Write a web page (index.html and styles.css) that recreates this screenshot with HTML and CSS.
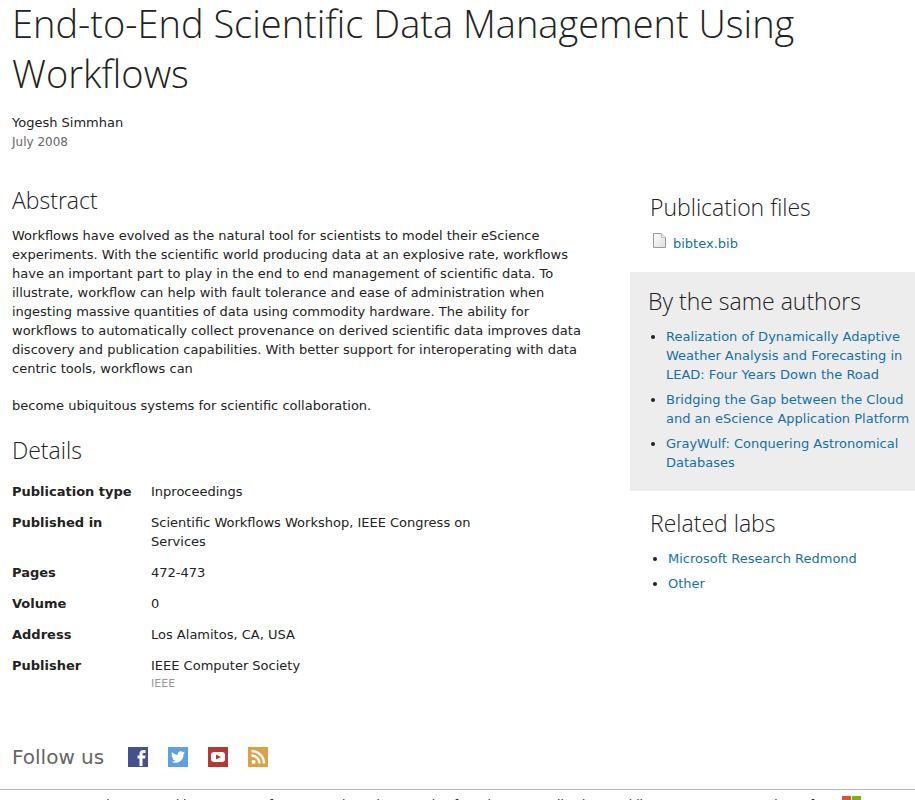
FILE: index.html
```html
<!DOCTYPE html>
<html lang="en">
<head>
  <meta charset="UTF-8">
  <title>End-to-End Scientific Data Management Using Workflows</title>
  <link rel="stylesheet" href="styles.css">
</head>
<body>

  <header class="pub-header">
    <h1>End-to-End Scientific Data Management Using Workflows</h1>
    <div class="author">Yogesh Simmhan</div>
    <div class="date">July 2008</div>
  </header>

  <div class="columns">
    <main>
      <h2>Abstract</h2>
      <p>Workflows have evolved as the natural tool for scientists to model their eScience experiments. With the scientific world producing data at an explosive rate, workflows have an important part to play in the end to end management of scientific data. To illustrate, workflow can help with fault tolerance and ease of administration when ingesting massive quantities of data using commodity hardware. The ability for workflows to automatically collect provenance on derived scientific data improves data discovery and publication capabilities. With better support for interoperating with data centric tools, workflows can</p>
      <p>become ubiquitous systems for scientific collaboration.</p>

      <h2 class="details-title">Details</h2>
      <table class="details">
        <tr><th scope="row">Publication type</th><td>Inproceedings</td></tr>
        <tr><th scope="row">Published in</th><td>Scientific Workflows Workshop, IEEE Congress on Services</td></tr>
        <tr><th scope="row">Pages</th><td>472-473</td></tr>
        <tr><th scope="row">Volume</th><td>0</td></tr>
        <tr><th scope="row">Address</th><td>Los Alamitos, CA, USA</td></tr>
        <tr><th scope="row">Publisher</th><td>IEEE Computer Society<small>IEEE</small></td></tr>
      </table>
    </main>

    <aside>
      <section class="side-box">
        <h2>Publication files</h2>
        <a class="file" href="#">
          <svg width="15" height="18" viewBox="0 0 15 18" aria-hidden="true">
            <defs>
              <linearGradient id="sheet" x1="0" y1="0" x2="1" y2="1">
                <stop offset="0" stop-color="#fff"/>
                <stop offset="1" stop-color="#ddd"/>
              </linearGradient>
            </defs>
            <path d="M1.500 1.500h8l4 4v10h-12z" fill="url(#sheet)" stroke="#999"/>
            <path d="M9.500 1.500v4h4" fill="#eee" stroke="#bbb"/>
          </svg>
          bibtex.bib
        </a>
      </section>
      <section class="side-box same-authors">
        <h2>By the same authors</h2>
        <ul>
          <li><a href="#">Realization of Dynamically Adaptive Weather Analysis and Forecasting in LEAD: Four Years Down the Road</a></li>
          <li><a href="#">Bridging the Gap between the Cloud and an eScience Application Platform</a></li>
          <li><a href="#">GrayWulf: Conquering Astronomical Databases</a></li>
        </ul>
      </section>
      <section class="side-box labs">
        <h2>Related labs</h2>
        <ul>
          <li><a href="#">Microsoft Research Redmond</a></li>
          <li><a href="#">Other</a></li>
        </ul>
      </section>
    </aside>
  </div>

  <div class="follow">
    <span>Follow us</span>
    <a href="#" aria-label="Facebook">
      <svg width="20" height="20" viewBox="0 0 20 20">
        <rect width="20" height="20" fill="#43528f"/>
        <path d="M11.500 19v-7.500H9.500v-3h2V7c0-2.600 1.400-4 3.800-4h2.200v3H16c-1.200 0-1.500.4-1.500 1.400v1.100h3l-.4 3h-2.600V19z" fill="#fff"/>
      </svg>
    </a>
    <a href="#" aria-label="Twitter">
      <svg width="20" height="20" viewBox="0 0 20 20">
        <rect width="20" height="20" fill="#5f9fe3"/>
        <path d="M17 5.600l-1.500.4c.6-.4 1-.9 1.100-1.500l-1.700.7a2.900 2.900 0 0 0-5 2.600C7.500 7.700 5.400 6.600 4 4.900c-.8 1.400-.4 3 .9 3.900l-1.300-.4c0 1.400 1 2.600 2.300 2.900l-1.300.1c.4 1.100 1.400 1.900 2.700 2A6 6 0 0 1 3 14.600c5.700 3.300 12.600-.3 12.600-7.400z" fill="#fff"/>
      </svg>
    </a>
    <a href="#" aria-label="YouTube">
      <svg width="20" height="20" viewBox="0 0 20 20">
        <rect width="20" height="20" fill="#b63832"/>
        <rect x="3" y="5" width="14" height="10" rx="3" fill="#fff"/>
        <path d="M8 7.500v5l5-2.500z" fill="#b63832"/>
      </svg>
    </a>
    <a href="#" aria-label="RSS">
      <svg width="20" height="20" viewBox="0 0 20 20">
        <rect width="20" height="20" fill="#dfa045"/>
        <circle cx="5.500" cy="15" r="2" fill="#fff"/>
        <path d="M3.500 8.500a8 8 0 0 1 8 8M3.500 4a12.500 12.500 0 0 1 12.500 12.500" fill="none" stroke="#fff" stroke-width="2.400"/>
      </svg>
    </a>
  </div>

  <footer>
    <nav>
      <a href="#">Contact us</a>
      <a href="#">Privacy &amp; cookies</a>
      <a href="#">Terms of use</a>
      <a href="#">Trademarks</a>
      <a href="#">Code of conduct</a>
      <a href="#">Feedback</a>
      <a href="#">Mobile</a>
    </nav>
    <span>© 2015 Microsoft</span>
    <div class="ms-logo">
      <svg width="19" height="19" viewBox="0 0 19 19" aria-hidden="true">
        <path d="M0 0h9v9H0z" fill="#e0522b"/>
        <path d="M10 0h9v9h-9z" fill="#7fae10"/>
        <path d="M0 10h9v9H0z" fill="#00a1f1"/>
        <path d="M10 10h9v9h-9z" fill="#ffbb00"/>
      </svg>
      <span>Microsoft</span>
    </div>
  </footer>

</body>
</html>
```
FILE: styles.css
```css
body {
  margin: 0;
  font-family: "DejaVu Sans", sans-serif;
  font-size: 13px;
  line-height: 19px;
  color: #222;
  background: #fff;
}

h1, h2 {
  margin: 0;
  font-family: "Open Sans", sans-serif;
  font-weight: 300;
  color: #222;
}

h1 {
  margin-top: -2px;
  font-size: 38px;
  line-height: 50px;
}

h2 {
  font-size: 23px;
  line-height: 32px;
}

a {
  color: #1570a6;
  text-decoration: none;
}

.pub-header {
  padding: 0 12px;
}

.author {
  margin-top: 15px;
}

.date {
  font-size: 12px;
  line-height: 21px;
  color: #666;
}

.columns {
  display: flex;
  justify-content: space-between;
  margin-top: 31px;
}

main {
  flex: 1;
  max-width: 572px;
  padding-left: 12px;
}

main p {
  margin: 10px 0 18px;
}

.details-title {
  margin-top: 19px;
}

.details {
  width: 480px;
  margin-top: 10px;
  border-collapse: collapse;
}

.details th,
.details td {
  padding: 6px 0;
  text-align: left;
  vertical-align: top;
}

.details th {
  width: 139px;
}

.details small {
  display: block;
  font-size: 11px;
  line-height: 18px;
  color: #999;
}

aside {
  width: 285px;
  padding-top: 7px;
}

.side-box {
  padding: 0 4px 0 20px;
}

.file {
  display: flex;
  gap: 6px;
  margin: 9px 0 16px 2px;
  line-height: 24px;
}

.same-authors {
  padding: 13px 4px 13px 18px;
  background: #ededed;
}

.side-box ul {
  margin: 10px 0 0;
  padding-left: 18px;
}

.side-box li {
  margin-bottom: 6px;
}

.labs {
  padding-top: 16px;
}

.follow {
  display: flex;
  align-items: center;
  gap: 20px;
  margin-top: 42px;
  padding: 0 12px;
}

.follow span {
  margin-right: 4px;
  font-size: 20px;
  line-height: 32px;
  color: #666;
}

.follow svg {
  display: block;
}

footer {
  display: flex;
  margin-top: 16px;
  padding: 6px 0 6px 8px;
  border-top: 1px solid #bbb;
  font-size: 12px;
}

footer nav {
  display: flex;
  flex: 1;
  gap: 22px;
}

footer a {
  color: #222;
}

.ms-logo {
  display: flex;
  gap: 5px;
  margin-left: 24px;
  font-family: "Open Sans", sans-serif;
  font-size: 11px;
  color: #777;
}
```
